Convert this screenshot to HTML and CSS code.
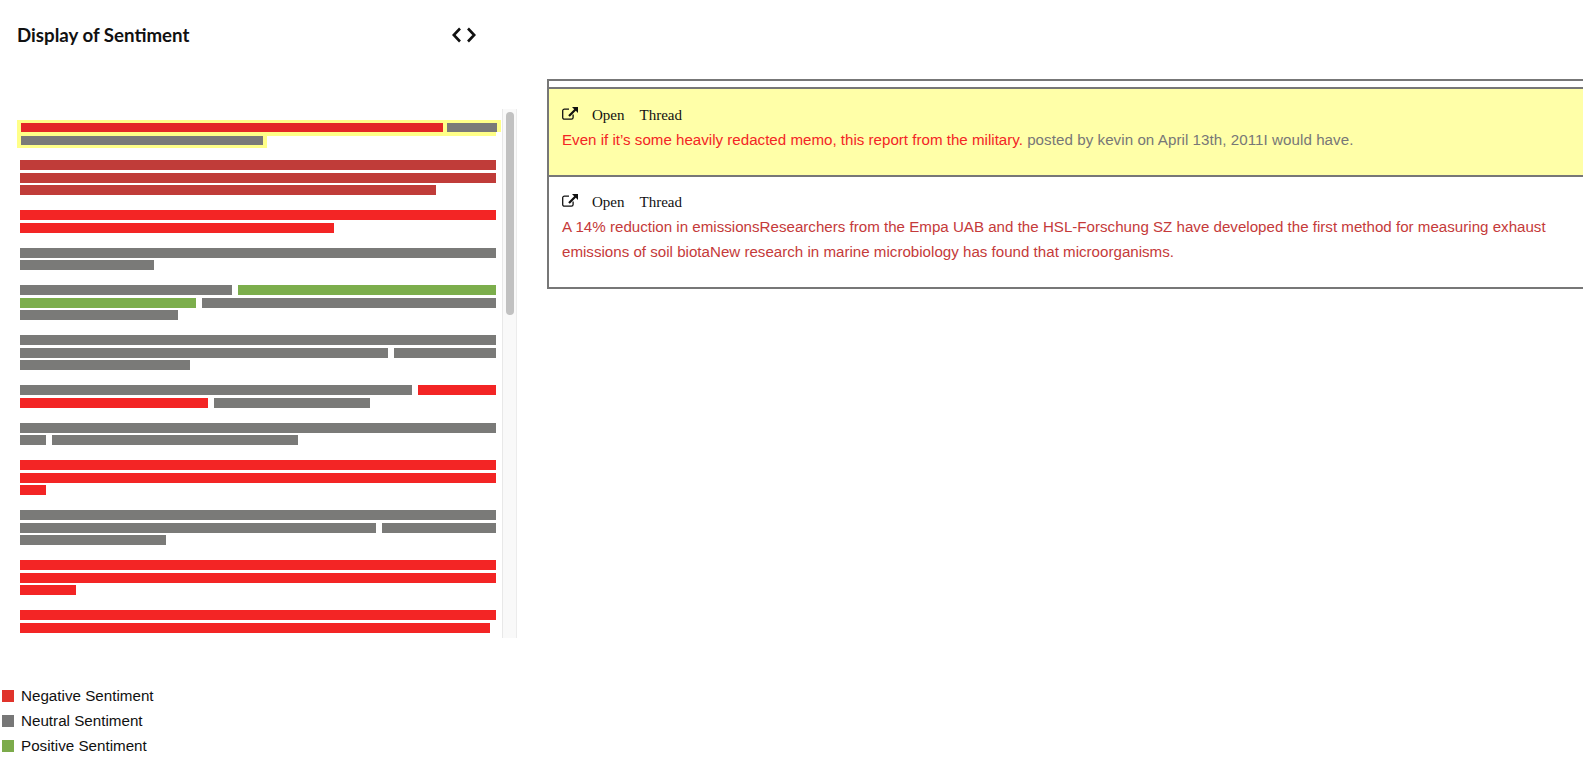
FILE: index.html
```html
<!DOCTYPE html>
<html lang="en">
<head>
<meta charset="utf-8">
<title>Display of Sentiment</title>
<link rel="stylesheet" href="styles.css">
</head>
<body>
<div class="app">
  <aside class="left">
    <header class="head">
      <h1 class="title">Display of Sentiment</h1>
      <svg class="chevrons" width="24" height="16" viewBox="0 0 24 16" aria-hidden="true">
        <path d="M8 1.500 1.800 8 8 14.500" />
        <path d="M16 1.500 22.200 8 16 14.500" />
      </svg>
    </header>
    <div class="scroller">
      <div class="hl-group">
        <div class="hl-row hl-first"><span class="bar hl-red" style="width:422px"></span><span class="bar hl-gray" style="width:50px"></span></div>
        <div class="hl-row hl-second"><span class="bar neu" style="width:242px"></span></div>
      </div>
      <div class="group">
        <div class="row"><span class="bar dark" style="width:476px"></span></div>
        <div class="row"><span class="bar dark" style="width:476px"></span></div>
        <div class="row"><span class="bar dark" style="width:416px"></span></div>
      </div>
      <div class="group">
        <div class="row"><span class="bar neg" style="width:476px"></span></div>
        <div class="row"><span class="bar neg" style="width:314px"></span></div>
      </div>
      <div class="group">
        <div class="row"><span class="bar neu" style="width:476px"></span></div>
        <div class="row"><span class="bar neu" style="width:134px"></span></div>
      </div>
      <div class="group">
        <div class="row"><span class="bar neu" style="width:212px"></span><span class="bar pos" style="width:258px"></span></div>
        <div class="row"><span class="bar pos" style="width:176px"></span><span class="bar neu" style="width:294px"></span></div>
        <div class="row"><span class="bar neu" style="width:158px"></span></div>
      </div>
      <div class="group">
        <div class="row"><span class="bar neu" style="width:476px"></span></div>
        <div class="row"><span class="bar neu" style="width:368px"></span><span class="bar neu" style="width:102px"></span></div>
        <div class="row"><span class="bar neu" style="width:170px"></span></div>
      </div>
      <div class="group">
        <div class="row"><span class="bar neu" style="width:392px"></span><span class="bar neg" style="width:78px"></span></div>
        <div class="row"><span class="bar neg" style="width:188px"></span><span class="bar neu" style="width:156px"></span></div>
      </div>
      <div class="group">
        <div class="row"><span class="bar neu" style="width:476px"></span></div>
        <div class="row"><span class="bar neu" style="width:26px"></span><span class="bar neu" style="width:246px"></span></div>
      </div>
      <div class="group">
        <div class="row"><span class="bar neg" style="width:476px"></span></div>
        <div class="row"><span class="bar neg" style="width:476px"></span></div>
        <div class="row"><span class="bar neg" style="width:26px"></span></div>
      </div>
      <div class="group">
        <div class="row"><span class="bar neu" style="width:476px"></span></div>
        <div class="row"><span class="bar neu" style="width:356px"></span><span class="bar neu" style="width:114px"></span></div>
        <div class="row"><span class="bar neu" style="width:146px"></span></div>
      </div>
      <div class="group">
        <div class="row"><span class="bar neg" style="width:476px"></span></div>
        <div class="row"><span class="bar neg" style="width:476px"></span></div>
        <div class="row"><span class="bar neg" style="width:56px"></span></div>
      </div>
      <div class="group">
        <div class="row"><span class="bar neg" style="width:476px"></span></div>
        <div class="row"><span class="bar neg" style="width:470px"></span></div>
      </div>
      <div class="track"><div class="thumb"></div></div>
    </div>
    <ul class="legend">
      <li class="legend-item"><span class="swatch swatch-neg"></span>Negative Sentiment</li>
      <li class="legend-item"><span class="swatch swatch-neu"></span>Neutral Sentiment</li>
      <li class="legend-item"><span class="swatch swatch-pos"></span>Positive Sentiment</li>
    </ul>
  </aside>
  <main class="right">
    <section class="panel">
      <div class="spacer"></div>
      <article class="item selected">
        <div class="links">
          <svg class="ext" width="16" height="13" viewBox="0 0 16 13" aria-hidden="true">
            <path class="ext-box" d="M7 2.100H2.400A1.700 1.700 0 0 0 .7 3.800v6.700a1.700 1.700 0 0 0 1.700 1.700h7a1.700 1.700 0 0 0 1.700-1.700V7.600" />
            <path class="ext-arrow" d="M10 0h6v6l-2.200-2.200-6 6-1.600-1.600 6-6z" />
          </svg>
          <span>Open</span><span>Thread</span>
        </div>
        <p class="text"><span class="t-neg">Even if it’s some heavily redacted memo, this report from the military.</span> <span class="t-neu">posted by kevin on April 13th, 2011I would have.</span></p>
      </article>
      <article class="item">
        <div class="links">
          <svg class="ext" width="16" height="13" viewBox="0 0 16 13" aria-hidden="true">
            <path class="ext-box" d="M7 2.100H2.400A1.700 1.700 0 0 0 .7 3.800v6.700a1.700 1.700 0 0 0 1.700 1.700h7a1.700 1.700 0 0 0 1.700-1.700V7.600" />
            <path class="ext-arrow" d="M10 0h6v6l-2.200-2.200-6 6-1.600-1.600 6-6z" />
          </svg>
          <span>Open</span><span>Thread</span>
        </div>
        <p class="text t-dark">A 14% reduction in emissionsResearchers from the Empa UAB and the HSL-Forschung SZ have developed the first method for measuring exhaust emissions of soil biotaNew research in marine microbiology has found that microorganisms.</p>
      </article>
    </section>
  </main>
</div>
</body>
</html>
```
FILE: styles.css
```css
html, body {
  margin: 0;
  padding: 0;
  height: 100%;
  overflow: hidden;
  background: #fff;
}

.app {
  display: flex;
  align-items: flex-start;
  width: 1700px;
}

.left {
  flex: 0 0 517px;
  width: 517px;
}

.head {
  display: flex;
  align-items: center;
  justify-content: space-between;
  height: 70px;
  padding: 0 41px 0 17px;
  box-sizing: border-box;
}

.title {
  margin: 0;
  font: 700 18.700px/24px Lato, "Open Sans", sans-serif;
  color: #111;
}

.chevrons {
  fill: none;
  stroke: #111;
  stroke-width: 2.6;
}

.scroller {
  position: relative;
  height: 529px;
  margin-top: 39px;
  padding-top: 11px;
  box-sizing: border-box;
  overflow: hidden;
}

.track {
  position: absolute;
  top: 0;
  bottom: 0;
  left: 502px;
  width: 15px;
  box-sizing: border-box;
  background: #f9f9f9;
  border-left: 1px solid #e8e8e8;
  border-right: 1px solid #ececec;
}

.thumb {
  width: 8px;
  height: 203px;
  margin: 3px 0 0 3px;
  border-radius: 4px;
  background: #c1c1c1;
}

.bar {
  display: block;
  height: 10px;
  flex: none;
}

.neg { background: #f32525; }
.dark { background: #c03c39; }
.neu { background: #7a7a78; }
.pos { background: #7cae4c; }

.hl-group {
  margin: 0 0 12px 17px;
  height: 28px;
}

.hl-row {
  background: #ffff88;
  display: flex;
  box-sizing: border-box;
  padding-left: 4px;
}

.hl-first {
  width: 479px;
  height: 16px;
  padding-top: 3px;
  gap: 4px;
}

.hl-second {
  width: 250px;
  height: 12px;
}

.hl-second .bar { height: 9px; }

.hl-red {
  height: 9px;
  background: #e32826;
}

.hl-gray {
  height: 9px;
  background: #7a7a78;
  box-shadow: 4px 0 0 #ffff88, 0 -3px 0 #ffff88, 4px -3px 0 #ffff88;
}

.group {
  padding: 0 0 12.5px 20px;
}

.row {
  display: flex;
  gap: 6px;
  height: 10px;
  margin-bottom: 2.5px;
}

.legend {
  list-style: none;
  margin: 0;
  padding: 45px 0 0 2px;
}

.legend-item {
  display: flex;
  align-items: center;
  gap: 7px;
  height: 25px;
  font: 15.200px/25px "Liberation Sans", Arial, sans-serif;
  color: #111;
}

.swatch {
  flex: none;
  width: 12px;
  height: 12px;
}

.swatch-neg { background: #e0332b; }
.swatch-neu { background: #777; }
.swatch-pos { background: #7cab4b; }

.right {
  flex: none;
  margin-left: 30px;
  padding-top: 79px;
}

.panel {
  width: 1060px;
  border: 2px solid #777;
}

.spacer {
  height: 6px;
}

.item {
  border-top: 2px solid #777;
  padding: 13px 15px 22px 13px;
}

.selected {
  background: #ffffa8;
  padding-bottom: 23px;
}

.selected .links {
  margin-top: 1px;
  margin-bottom: -1px;
}

.links {
  display: flex;
  align-items: center;
  gap: 14px;
  height: 25px;
  font: 15px/25px "Liberation Serif", "Times New Roman", serif;
  color: #111;
}

.links span + span {
  margin-left: 1px;
}

.ext {
  flex: none;
  margin-top: -4px;
}

.ext-box {
  fill: none;
  stroke: #111;
  stroke-width: 1.3;
}

.ext-arrow {
  fill: #111;
}

.text {
  margin: 0;
  font: 15.140px/25px "Liberation Sans", Arial, sans-serif;
}

.t-neg { color: #f32525; }
.t-neu { color: #777; letter-spacing: .06px; }
.t-dark {
  color: #c53a3a;
  margin-top: -1px;
  margin-bottom: 1px;
}
```
